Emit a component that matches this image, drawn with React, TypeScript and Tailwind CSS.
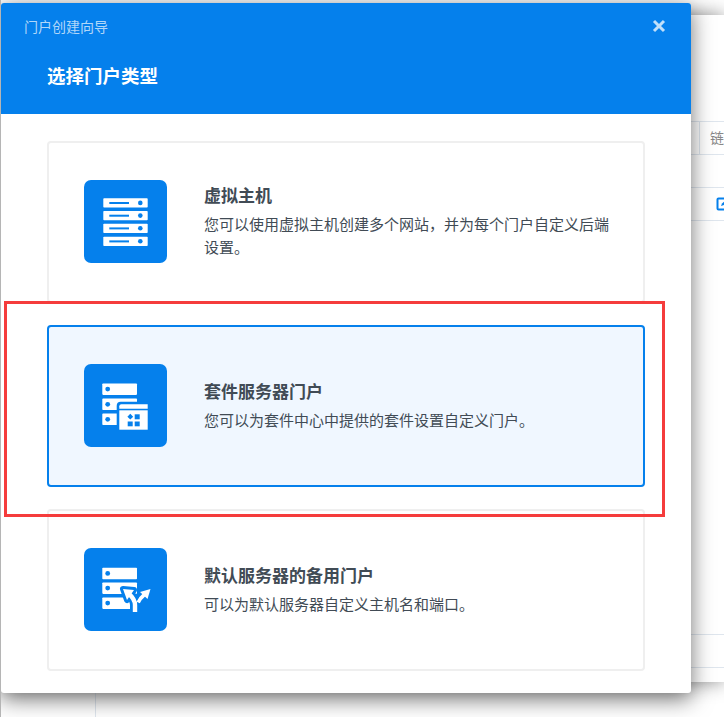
import React from 'react';

const BLUE = '#0580ec';

const cards = [
  {
    title: '虚拟主机',
    desc: '您可以使用虚拟主机创建多个网站，并为每个门户自定义后端设置。',
    icon: 'hosts',
  },
  {
    title: '套件服务器门户',
    desc: '您可以为套件中心中提供的套件设置自定义门户。',
    icon: 'package',
    selected: true,
  },
  {
    title: '默认服务器的备用门户',
    desc: '可以为默认服务器自定义主机名和端口。',
    icon: 'fallback',
  },
];

const HostBar = ({ y }: { y: number }) => (
  <>
    <rect x={19.3} y={y} width={44.4} height={9.3} rx={0.8} fill="#fff" />
    <rect x={25.3} y={y + 3.7} width={19.7} height={2} fill={BLUE} />
    <circle cx={56.3} cy={y + 4.6} r={2.3} fill={BLUE} />
  </>
);

const ServerBar = ({ y }: { y: number }) => (
  <>
    <rect x={18.3} y={y} width={34.7} height={11.5} rx={0.8} fill="#fff" />
    <circle cx={23.7} cy={y + 5.7} r={2.4} fill={BLUE} />
  </>
);

const CardIcon = ({ kind }: { kind: string }) => (
  <div className="mb-[2px] h-[83px] w-[83px] shrink-0 rounded-[7px] bg-[#0580ec]">
    <svg width="83" height="83" viewBox="0 0 83 83">
      {kind === 'hosts' && (
        <>
          <HostBar y={18.3} />
          <HostBar y={31} />
          <HostBar y={43.7} />
          <HostBar y={56.7} />
        </>
      )}
      {kind === 'package' && (
        <>
          <ServerBar y={19.4} />
          <ServerBar y={34.6} />
          <ServerBar y={49.6} />
          <path d="M32.7 68V41.7a4 4 0 0 1 4-4H66V68Z" fill={BLUE} />
          <path d="M35.3 44.7v-2.4a2 2 0 0 1 2-2h26.4v4.4Z" fill="#fff" />
          <rect x={35.3} y={46.3} width={28.4} height={19.4} fill="#fff" />
          <path d="M46.3 49.8l2.9 2.9-2.9 2.9-2.9-2.9Z" fill={BLUE} />
          <rect x={50.7} y={50.3} width={5} height={5} fill={BLUE} />
          <rect x={43.7} y={57.5} width={5} height={4.8} fill={BLUE} />
          <rect x={50.7} y={57.5} width={5} height={4.8} fill={BLUE} />
        </>
      )}
      {kind === 'fallback' && (
        <>
          <ServerBar y={19.7} />
          <ServerBar y={34.4} />
          <ServerBar y={49.4} />
          {/* knock-out round the left arrow */}
          <path d="M39 41l11 1-7 10Z" fill={BLUE} stroke={BLUE} strokeWidth="6" strokeLinejoin="round" />
          <path d="M45 46c3.5 3 6 6 6 11v12" fill="none" stroke={BLUE} strokeWidth="10" />
          <path d="M39 41l11 1-7 10Z" fill="#fff" />
          <path d="M45 46c3.5 3 6 6 6 11v7" fill="none" stroke="#fff" strokeWidth="4.4" />
          <path d="M66.5 41l-10.5 3 7.5 7Z" fill="#fff" />
          <path d="M60.5 46.5c-3 2.5-5 5-6.3 8" fill="none" stroke="#fff" strokeWidth="3.6" />
        </>
      )}
    </svg>
  </div>
);

export default function App() {
  return (
    <div className="relative h-[717px] w-[724px] overflow-hidden border-l border-[#b5b5b5] bg-white pt-[15px] font-['Roboto','Noto_Sans_CJK_SC',sans-serif]">
      {/* page panel behind the dialog */}
      <div className="flex h-[667px] flex-col pl-[690px] pt-[106px] shadow-[0_0_18px_rgba(0,0,0,0.45)]">
        <div className="flex h-[34px] shrink-0 border-y border-[#dfe6ee]">
          <div className="w-[11px] border-r border-[#dfe6ee]" />
          <span className="pl-[10px] text-sm leading-[32px] text-[#888]">链</span>
        </div>
        <div className="mt-[32px] flex h-[34px] shrink-0 items-center border-y border-[#dfe6ee] pl-[25px]">
          <svg width="14" height="14" viewBox="0 0 14 14" className="shrink-0">
            <path d="M8 1.5H2.5a1 1 0 0 0-1 1v9a1 1 0 0 0 1 1h9a1 1 0 0 0 1-1V7" fill="none" stroke={BLUE} strokeWidth="2" />
            <path d="M5 9l1-2.5L11 2l1.5 1.5L8 8Z" fill={BLUE} />
          </svg>
        </div>
        <div className="mt-[413px] h-[34px] shrink-0 border-y border-[#dfe6ee]" />
      </div>
      <div className="ml-[94px] h-[35px] w-px bg-[#dfe6ee]" />

      {/* dialog */}
      <div className="absolute left-0 top-[3px] flex h-[690px] w-[690px] flex-col overflow-hidden rounded-[3px] bg-white shadow-[0_6px_22px_rgba(0,0,0,0.55)]">
        <div className="h-[111px] shrink-0 bg-[#0580ec]">
          <div className="flex items-center justify-between pl-[23px] pr-[25px] pt-[15px]">
            <span className="text-sm leading-[18px] text-white/70">门户创建向导</span>
            <svg width="14" height="14" viewBox="0 0 14 14" className="-mt-[2px]">
              <path d="M2 2l10 10M12 2L2 12" stroke="#fff" strokeOpacity="0.75" strokeWidth="3" />
            </svg>
          </div>
          <h1 className="pl-[46px] pt-[29px] text-[18.5px] font-bold leading-[24px] text-white">选择门户类型</h1>
        </div>
        <div className="flex flex-col gap-[22px] px-[46px] pt-[27px]">
          {cards.map((c) => (
            <div
              key={c.title}
              className={
                c.selected
                  ? 'flex h-[162px] items-center gap-[37px] rounded-[4px] border-2 border-[#0580ec] bg-[#f0f7ff] pl-[35px] pr-[15px]'
                  : 'flex h-[162px] items-center gap-[37px] rounded-[4px] border-2 border-[#efefef] bg-white pl-[35px] pr-[15px]'
              }
            >
              <CardIcon kind={c.icon} />
              <div className="w-[410px]">
                <h2 className="text-[17px] font-bold leading-[24px] text-[#414b55]">{c.title}</h2>
                <p className="mt-[6px] text-[15px] leading-[23px] text-[#414b55]">{c.desc}</p>
              </div>
            </div>
          ))}
        </div>
      </div>

      {/* annotation */}
      <div className="absolute left-[3px] top-[301px] h-[216px] w-[661px] border-[3px] border-[#f53c3c]" />
    </div>
  );
}
